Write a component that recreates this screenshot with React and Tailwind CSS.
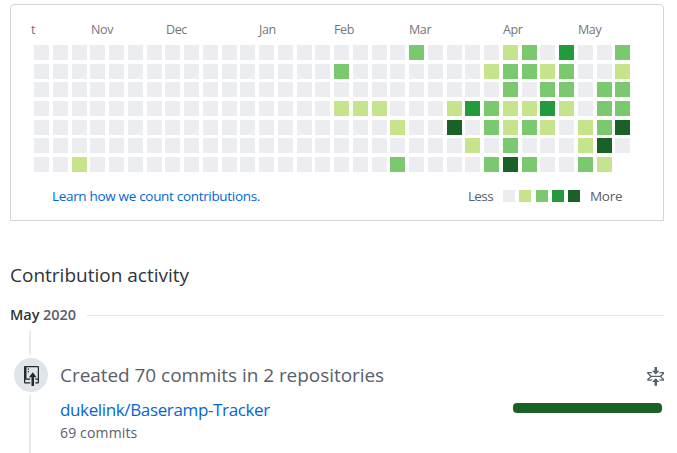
const LEVELS = ['bg-[#ebedf0]', 'bg-[#c6e48b]', 'bg-[#7bc96f]', 'bg-[#239a3b]', 'bg-[#196127]'];

// One string per weekday; each digit is the contribution level of a week.
const WEEKDAYS = [
  '00000000000000000000200001203002',
  '00000000000000002000000012212001',
  '00000000000000000000000002022022',
  '00000000000000001110001321131022',
  '00000000000000000001004021210124',
  '00000000000000000000000102000140',
  '0010000000000000000200002420021 ',
];

const MONTHS = [
  ['t', 'w-[60px]'],
  ['Nov', 'w-[75px]'],
  ['Dec', 'w-[93px]'],
  ['Jan', 'w-[75px]'],
  ['Feb', 'w-[75px]'],
  ['Mar', 'w-[94px]'],
  ['Apr', 'w-[75px]'],
  ['May', 'w-[40px]'],
];

function Calendar() {
  return (
    <section className="h-[217px] w-[654px] rounded-t-[4px] border border-[#d1d5da]">
      <div className="flex h-[40px] pl-[20px] pt-[16px] text-[12.5px] leading-[18px] tracking-[-0.4px] text-[#767676]">
        {MONTHS.map(([name, width]) => (
          <span key={name} className={`shrink-0 ${width}`}>{name}</span>
        ))}
      </div>
      <div className="flex flex-col gap-[3.7px] pl-[23.1px]">
        {WEEKDAYS.map((row, y) => (
          <div key={y} className="flex gap-[3.75px]">
            {[...row].map((level, x) => (
              <span key={x} className={`size-[15px] shrink-0 ${level === ' ' ? '' : LEVELS[level]}`} />
            ))}
          </div>
        ))}
      </div>
      <div className="mt-[13.8px] flex h-[20px] items-center pl-[41px] pr-[41px] text-[13.5px] leading-[20px] text-[#586069]">
        <a className="tracking-[-0.32px] text-[#0366d6]">Learn how we count contributions.</a>
        <span className="ml-auto mr-[10px] tracking-[-0.6px]">Less</span>
        <span className="flex gap-[4.25px]">
          {LEVELS.map((color) => (
            <span key={color} className={`size-[12px] ${color}`} />
          ))}
        </span>
        <span className="ml-[10px] w-[32px] tracking-[-0.3px]">More</span>
      </div>
    </section>
  );
}

function RepoPushIcon() {
  return (
    <svg viewBox="0 0 12 16" className="h-[20px] w-[15px]" fill="currentColor">
      <path d="M4 3H3V2h1v1zM3 5h1V4H3v1zm4 0L4 9h2v7h2V9h2L7 5zm4-5H1C.45 0 0 .45 0 1v12c0 .55.45 1 1 1h4v-1H1v-2h4v-1H2V1h9.02L11 10H9v1h2v2H9v1h2c.55 0 1-.45 1-1V1c0-.55-.45-1-1-1z" />
    </svg>
  );
}

function FoldIcon() {
  return (
    <svg viewBox="0 0 14 16" className="h-[20px] w-[17.5px]" fill="currentColor">
      <path d="M7 9l3 3H8v3H6v-3H4l3-3zm3-6H8V0H6v3H4l3 3 3-3zm4 2c0-.55-.45-1-1-1h-2.5l-1 1h3l-2 2h-7l-2-2h3l-1-1H1c-.55 0-1 .45-1 1l2.5 2.5L0 10c0 .55.45 1 1 1h2.5l1-1h-3l2-2h7l2 2h-3l1 1H13c.55 0 1-.45 1-1l-2.5-2.5L14 5z" />
    </svg>
  );
}

export default function App() {
  return (
    <main className="h-[453px] w-[677px] overflow-hidden whitespace-nowrap bg-white pl-[10px] pt-[4px] font-['Open_Sans','Noto_Sans',sans-serif]">
      <Calendar />
      <h2 className="mt-[40px] h-[28px] text-[19px] leading-[28px] text-[#2f343a]">Contribution activity</h2>
      <h3 className="mt-[16px] flex h-[20px] w-[654px] items-center text-[14.5px] font-semibold leading-[20px] tracking-[-0.05px] text-[#2f343a]">
        <span>May <span className="text-[#586069]">2020</span></span>
        <span className="ml-auto h-px w-[577px] bg-[#e1e4e8]" />
      </h3>
      <div className="mt-[6px] flex w-[654px]">
        <div className="flex w-[50px] shrink-0 flex-col items-start pl-[4px]">
          <span className="ml-[15px] h-[24px] w-[2px] bg-[#e8eaed]" />
          <span className="mt-[3px] flex size-[34px] items-center justify-center rounded-full bg-[#e1e4e8] pt-[2px] text-[#24292e]">
            <RepoPushIcon />
          </span>
          <span className="ml-[15px] mt-[3px] h-[60px] w-[2px] bg-[#e8eaed]" />
        </div>
        <div className="flex-1 pt-[30px]">
          <div className="flex h-[28px] items-center justify-between text-[#586069]">
            <h4 className="text-[19px] leading-[28px] tracking-[-0.05px]">Created 70 commits in 2 repositories</h4>
            <span className="pt-[4px]"><FoldIcon /></span>
          </div>
          <div className="mt-[9px] flex h-[24px] items-center justify-between pr-[2px]">
            <a className="text-[17px] leading-[24px] tracking-[-0.36px] text-[#0366d6]">dukelink/Baseramp-Tracker</a>
            <span className="mb-[4px] h-[10px] w-[149px] rounded-[4px] bg-[#196127]" />
          </div>
          <p className="mt-[1px] text-[14px] leading-[20px] tracking-[0.15px] text-[#586069]">69 commits</p>
        </div>
      </div>
    </main>
  );
}
